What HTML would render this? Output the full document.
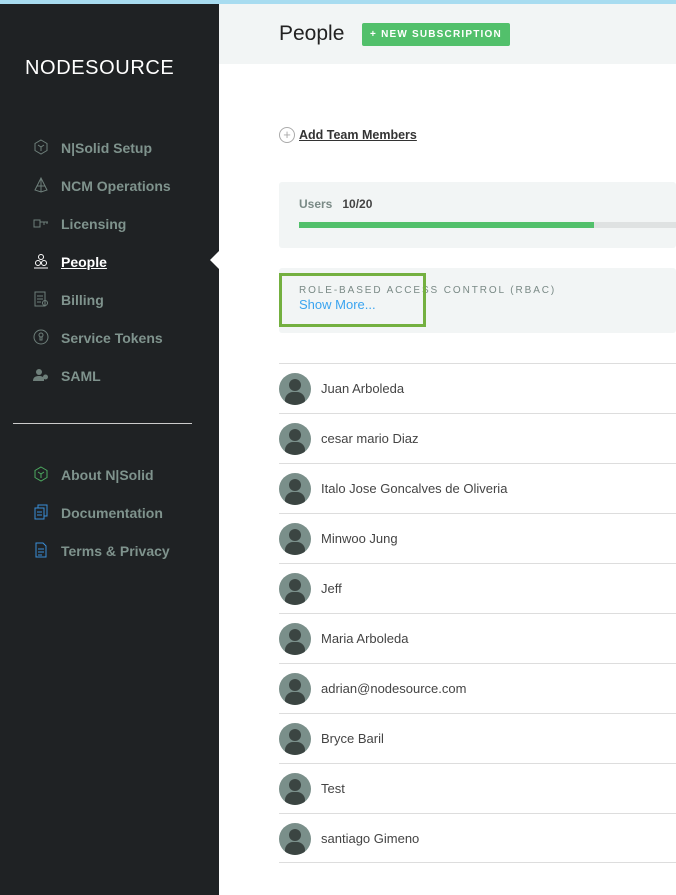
<!DOCTYPE html>
<html><head><style>
*{margin:0;padding:0;box-sizing:border-box}
body{width:676px;height:895px;overflow:hidden;font-family:"Liberation Sans",sans-serif;background:#fff;position:relative}
.top{position:absolute;left:0;top:0;width:676px;height:4px;background:#a8dcf0}
.side{position:absolute;left:0;top:4px;width:219px;height:891px;background:#1f2224}
.logo{position:absolute;left:25px;top:53px;color:#fff;font-size:20px;letter-spacing:0.6px}
.it{position:absolute;left:61px;color:#7f938d;font-weight:bold;font-size:14px;line-height:18px;top:0}
.ic{position:absolute;left:33px;width:16px;height:16px}
.act{color:#fff;text-decoration:underline}
.hr{position:absolute;left:13px;top:423px;width:179px;height:1px;background:#ccc}
.arrow{position:absolute;left:210px;top:251px;width:0;height:0;border-top:9px solid transparent;border-bottom:9px solid transparent;border-right:9px solid #fff}
.hdr{position:absolute;left:219px;top:4px;width:457px;height:60px;background:#f2f5f5}
.h1{position:absolute;left:279px;top:22px;font-size:21px;color:#222}
.btn{position:absolute;left:362px;top:23px;width:148px;height:23px;background:#52c06b;border-radius:2px;color:#fff;font-size:10px;font-weight:bold;letter-spacing:1.2px;line-height:23px;text-align:center}
.add{position:absolute;left:299px;top:128px;font-size:12.5px;font-weight:bold;color:#333;text-decoration:underline}
.plus{position:absolute;left:279px;top:127px;width:16px;height:16px;border:1px solid #aaa;border-radius:50%;color:#aaa;font-size:13px;line-height:13px;text-align:center}
.box{position:absolute;left:279px;width:397px;background:#f2f5f5;border-radius:3px}
.bar{position:absolute;left:299px;top:222px;width:377px;height:6px;background:#dfe2e2}
.bar div{width:295px;height:6px;background:#52c06b}
.rbac{position:absolute;left:299px;top:285px;font-size:10px;letter-spacing:1.9px;color:#7a8a86}
.show{position:absolute;left:299px;top:297px;font-size:13px;color:#3aa4f0}
.green{position:absolute;left:279px;top:273px;width:147px;height:54px;border:3px solid #74b040}
.row{position:absolute;left:279px;width:397px;height:50px;border-top:1px solid #ddd;font-size:13px;color:#444}
.row span{position:absolute;left:42px;top:17px}
.av{position:absolute;left:0;top:9px;width:32px;height:32px;border-radius:50%;background:#7a8f8a;overflow:hidden}
.av:before{content:"";position:absolute;left:10px;top:6px;width:12px;height:12px;border-radius:50%;background:#3b4542}
.av:after{content:"";position:absolute;left:6px;top:19px;width:20px;height:14px;border-radius:8px 8px 0 0;background:#3b4542}
</style></head><body>
<div class="top"></div>
<div class="side">
<div class="logo">NODESOURCE</div>
</div>
<svg class="ic" style="top:139px" viewBox="0 0 16 16" fill="none" stroke="#6e7f7a"><path d="M8 1l6 3.5v7L8 15 2 11.5v-7z"/><path d="M5 6l3 2 3-2M8 8v4"/></svg>
<div class="it" style="top:139px">N|Solid Setup</div>
<svg class="ic" style="top:177px" viewBox="0 0 16 16" fill="none" stroke="#6e7f7a"><path d="M8 1L2 13l6 2 6-2zM8 1v14M4 9h8"/></svg>
<div class="it" style="top:177px">NCM Operations</div>
<svg class="ic" style="top:215px" viewBox="0 0 16 16" fill="none" stroke="#6e7f7a"><rect x="1" y="5" width="6" height="7"/><path d="M7 7h8M11 7v3M14 7v2"/></svg>
<div class="it" style="top:215px">Licensing</div>
<svg class="ic" style="top:253px" viewBox="0 0 16 16" fill="none" stroke="#fff"><circle cx="8" cy="4" r="2.5"/><circle cx="5" cy="10" r="2.5"/><circle cx="11" cy="10" r="2.5"/><path d="M1 15h14"/></svg>
<div class="it act" style="top:253px">People</div>
<svg class="ic" style="top:291px" viewBox="0 0 16 16" fill="none" stroke="#6e7f7a"><rect x="2" y="1" width="10" height="14"/><path d="M4 5h6M4 8h6M4 11h4"/><circle cx="12" cy="12" r="2.5"/></svg>
<div class="it" style="top:291px">Billing</div>
<svg class="ic" style="top:329px" viewBox="0 0 16 16" fill="none" stroke="#6e7f7a"><circle cx="8" cy="8" r="7"/><circle cx="8" cy="6" r="2"/><path d="M7 8v3h2V8"/></svg>
<div class="it" style="top:329px">Service Tokens</div>
<svg class="ic" style="top:367px" viewBox="0 0 16 16" fill="#6e7f7a"><circle cx="6" cy="5" r="3"/><path d="M0 14c0-4 3-5 6-5s4 1 5 2v3z"/><circle cx="12.5" cy="10" r="2.5" fill="#6e7f7a"/></svg>
<div class="it" style="top:367px">SAML</div>
<div class="hr"></div>
<svg class="ic" style="top:466px" viewBox="0 0 16 16" fill="none" stroke="#4caa60"><path d="M8 1l6 3.5v7L8 15 2 11.5v-7z"/><path d="M5 6l3 2 3-2M8 8v4"/></svg>
<div class="it" style="top:466px">About N|Solid</div>
<svg class="ic" style="top:504px" viewBox="0 0 16 16" fill="none" stroke="#3a8fd8"><rect x="5" y="1" width="9" height="11"/><rect x="2" y="4" width="9" height="11" fill="#1f2224"/><path d="M4 8h5M4 11h5"/></svg>
<div class="it" style="top:504px">Documentation</div>
<svg class="ic" style="top:542px" viewBox="0 0 16 16" fill="none" stroke="#3a8fd8"><path d="M3 1h7l3 3v11H3z"/><path d="M5 7h6M5 10h6M5 13h4"/></svg>
<div class="it" style="top:542px">Terms &amp; Privacy</div>
<div class="arrow"></div>
<div class="hdr"></div>
<div class="h1">People</div>
<div class="btn">+ NEW SUBSCRIPTION</div>
<div class="plus">+</div>
<div class="add">Add Team Members</div>
<div class="box" style="top:182px;height:66px"></div>
<div style="position:absolute;left:299px;top:197px;font-size:12px;font-weight:bold;color:#7a8a86">Users&nbsp;&nbsp; <span style="color:#444">10/20</span></div>
<div class="bar"><div></div></div>
<div class="box" style="top:268px;height:65px"></div>
<div class="rbac">ROLE-BASED ACCESS CONTROL (RBAC)</div>
<div class="show">Show More...</div>
<div class="green"></div>
<div class="row" style="top:363px"><div class="av"></div><span>Juan Arboleda</span></div>
<div class="row" style="top:413px"><div class="av"></div><span>cesar mario Diaz</span></div>
<div class="row" style="top:463px"><div class="av"></div><span>Italo Jose Goncalves de Oliveria</span></div>
<div class="row" style="top:513px"><div class="av"></div><span>Minwoo Jung</span></div>
<div class="row" style="top:563px"><div class="av"></div><span>Jeff</span></div>
<div class="row" style="top:613px"><div class="av"></div><span>Maria Arboleda</span></div>
<div class="row" style="top:663px"><div class="av"></div><span>adrian@nodesource.com</span></div>
<div class="row" style="top:713px"><div class="av"></div><span>Bryce Baril</span></div>
<div class="row" style="top:763px"><div class="av"></div><span>Test</span></div>
<div class="row" style="top:813px;border-bottom:1px solid #ddd;height:50px"><div class="av"></div><span>santiago Gimeno</span></div>
</body></html>
